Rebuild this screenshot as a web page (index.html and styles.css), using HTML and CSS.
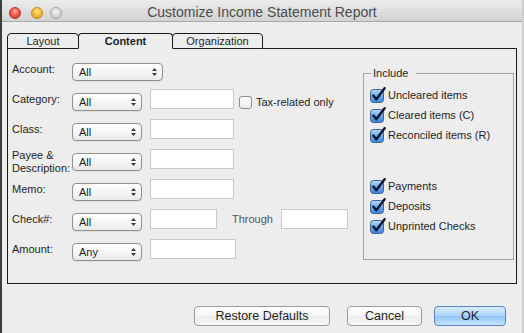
FILE: index.html
```html
<!DOCTYPE html>
<html lang="en-US">
  <head>
    <meta charset="utf-8" />
    <meta name="viewport" content="width=device-width" />
    <title>Customize Income Statement Report</title>
    <link rel="stylesheet" href="styles.css">
  </head>
  <body>
    <div class="window">
      <div class="titlebar">
        <div class="lights">
          <span class="light red"></span>
          <span class="light yellow"></span>
          <span class="light off"></span>
        </div>
        <div class="title">Customize Income Statement Report</div>
      </div>

      <div class="content">
        <div class="tabs">
          <div class="tab layout">Layout</div>
          <div class="tab active">Content</div>
          <div class="tab organization">Organization</div>
        </div>

        <div class="panel">
          <div class="form">
            <div class="row">
              <span class="label">Account:</span>
              <div class="popup wide"><span>All</span><svg class="arrows" width="5" height="8" viewBox="0 0 5 8"><path d="M2.5 0 L5 3 L0 3 Z M0 5 L5 5 L2.5 8 Z" fill="#3a3a3a"/></svg></div>
            </div>
            <div class="row">
              <span class="label">Category:</span>
              <div class="popup"><span>All</span><svg class="arrows" width="5" height="8" viewBox="0 0 5 8"><path d="M2.5 0 L5 3 L0 3 Z M0 5 L5 5 L2.5 8 Z" fill="#3a3a3a"/></svg></div>
              <div class="field"></div>
              <span class="box"></span>
              <span class="box-label">Tax-related only</span>
            </div>
            <div class="row">
              <span class="label">Class:</span>
              <div class="popup"><span>All</span><svg class="arrows" width="5" height="8" viewBox="0 0 5 8"><path d="M2.5 0 L5 3 L0 3 Z M0 5 L5 5 L2.5 8 Z" fill="#3a3a3a"/></svg></div>
              <div class="field"></div>
            </div>
            <div class="row">
              <span class="label two-line">Payee &amp;<br>Description:</span>
              <div class="popup"><span>All</span><svg class="arrows" width="5" height="8" viewBox="0 0 5 8"><path d="M2.5 0 L5 3 L0 3 Z M0 5 L5 5 L2.5 8 Z" fill="#3a3a3a"/></svg></div>
              <div class="field"></div>
            </div>
            <div class="row">
              <span class="label">Memo:</span>
              <div class="popup"><span>All</span><svg class="arrows" width="5" height="8" viewBox="0 0 5 8"><path d="M2.5 0 L5 3 L0 3 Z M0 5 L5 5 L2.5 8 Z" fill="#3a3a3a"/></svg></div>
              <div class="field"></div>
            </div>
            <div class="row">
              <span class="label">Check#:</span>
              <div class="popup"><span>All</span><svg class="arrows" width="5" height="8" viewBox="0 0 5 8"><path d="M2.5 0 L5 3 L0 3 Z M0 5 L5 5 L2.5 8 Z" fill="#3a3a3a"/></svg></div>
              <div class="field short"></div>
              <span class="through">Through</span>
              <div class="field short"></div>
            </div>
            <div class="row">
              <span class="label">Amount:</span>
              <div class="popup"><span>Any</span><svg class="arrows" width="5" height="8" viewBox="0 0 5 8"><path d="M2.5 0 L5 3 L0 3 Z M0 5 L5 5 L2.5 8 Z" fill="#3a3a3a"/></svg></div>
              <div class="field long"></div>
            </div>
          </div>

          <fieldset class="include">
            <legend>Include</legend>
            <div class="crow first">
              <svg class="tick" width="16" height="16" viewBox="0 0 16 16">
                <defs>
                  <linearGradient id="blue" x1="0" y1="0" x2="0" y2="1">
                    <stop offset="0" stop-color="#b9dafc"/>
                    <stop offset="0.5" stop-color="#6aaaf0"/>
                    <stop offset="1" stop-color="#3b83e0"/>
                  </linearGradient>
                </defs>
                <rect x="0.5" y="2.5" width="13" height="13" rx="3" fill="url(#blue)" stroke="#41608f"/>
                <path d="M3.3 8.6 L6.3 12.3 L14.6 1.2" fill="none" stroke="#0e1930" stroke-width="2.4" stroke-linecap="round" stroke-linejoin="round"/>
              </svg>
              Uncleared items
            </div>
            <div class="crow">
              <svg class="tick" width="16" height="16" viewBox="0 0 16 16"><rect x="0.5" y="2.5" width="13" height="13" rx="3" fill="url(#blue)" stroke="#41608f"/><path d="M3.3 8.6 L6.3 12.3 L14.6 1.2" fill="none" stroke="#0e1930" stroke-width="2.4" stroke-linecap="round" stroke-linejoin="round"/></svg>
              Cleared items (C)
            </div>
            <div class="crow">
              <svg class="tick" width="16" height="16" viewBox="0 0 16 16"><rect x="0.5" y="2.5" width="13" height="13" rx="3" fill="url(#blue)" stroke="#41608f"/><path d="M3.3 8.6 L6.3 12.3 L14.6 1.2" fill="none" stroke="#0e1930" stroke-width="2.4" stroke-linecap="round" stroke-linejoin="round"/></svg>
              Reconciled items (R)
            </div>
            <div class="crow spaced">
              <svg class="tick" width="16" height="16" viewBox="0 0 16 16"><rect x="0.5" y="2.5" width="13" height="13" rx="3" fill="url(#blue)" stroke="#41608f"/><path d="M3.3 8.6 L6.3 12.3 L14.6 1.2" fill="none" stroke="#0e1930" stroke-width="2.4" stroke-linecap="round" stroke-linejoin="round"/></svg>
              Payments
            </div>
            <div class="crow">
              <svg class="tick" width="16" height="16" viewBox="0 0 16 16"><rect x="0.5" y="2.5" width="13" height="13" rx="3" fill="url(#blue)" stroke="#41608f"/><path d="M3.3 8.6 L6.3 12.3 L14.6 1.2" fill="none" stroke="#0e1930" stroke-width="2.4" stroke-linecap="round" stroke-linejoin="round"/></svg>
              Deposits
            </div>
            <div class="crow last">
              <svg class="tick" width="16" height="16" viewBox="0 0 16 16"><rect x="0.5" y="2.5" width="13" height="13" rx="3" fill="url(#blue)" stroke="#41608f"/><path d="M3.3 8.6 L6.3 12.3 L14.6 1.2" fill="none" stroke="#0e1930" stroke-width="2.4" stroke-linecap="round" stroke-linejoin="round"/></svg>
              Unprinted Checks
            </div>
          </fieldset>
        </div>

        <div class="buttons">
          <button class="btn restore">Restore Defaults</button>
          <button class="btn cancel">Cancel</button>
          <button class="btn ok">OK</button>
        </div>
      </div>
    </div>
  </body>
</html>
```

FILE: styles.css
```css
html {
  font-family: "Liberation Sans", Arial, sans-serif;
}

body {
  margin: 0;
  height: 333px;
  overflow: hidden;
  background: linear-gradient(to right, #3d3d3d 0, #3d3d3d 2px, #cfcfcf 2px);
  font-size: 11px;
  color: #1e1e1e;
}

.window {
  margin-left: 2px;
  width: 520px;
  height: 333px;
  background: #ededed;
}

/* title bar */

.titlebar {
  position: relative;
  height: 21px;
  border-bottom: 1px solid #a9a9a9;
  background: linear-gradient(#ececec, #d2d2d2);
}

.title {
  text-align: center;
  font-size: 14px;
  line-height: 21px;
  padding-top: 2px;
  color: #4b4b4b;
}

.lights {
  position: absolute;
  left: 7px;
  top: 7px;
  display: flex;
}

.light {
  width: 12px;
  height: 12px;
  box-sizing: border-box;
  border-radius: 50%;
}

.red {
  border: 1px solid #b53a31;
  background: radial-gradient(circle at 50% 35%, #ffb3a8 0, #f35b4d 45%, #c9271c 100%);
}

.yellow {
  margin-left: 10px;
  border: 1px solid #c4891e;
  background: radial-gradient(circle at 50% 35%, #ffe7a3 0, #f8be3d 45%, #d58e12 100%);
}

.off {
  margin-left: 7px;
  border: 1px solid #a3a3a3;
  background: radial-gradient(circle at 50% 35%, #f6f6f6 0, #d8d8d8 50%, #bdbdbd 100%);
}

/* tabs */

.content {
  padding: 11px 0 0 5px;
}

.tabs {
  display: flex;
  margin-bottom: -1px;
}

.tab {
  position: relative;
  height: 14px;
  border: 1px solid #1a1a1a;
  border-radius: 4px 4px 0 0;
  margin-right: -1px;
  line-height: 14px;
  text-align: center;
  background: #ededed;
}

.layout {
  width: 70px;
}

.active {
  width: 93px;
  z-index: 1;
  font-weight: bold;
  border-bottom-color: #ededed;
}

.organization {
  width: 89px;
}

.panel {
  display: flex;
  width: 510px;
  height: 236px;
  box-sizing: border-box;
  border: 1px solid #1a1a1a;
}

/* left form */

.form {
  flex: 1;
  padding: 5px 0 0 4px;
}

.row {
  display: flex;
  align-items: center;
  height: 30px;
}

.label {
  flex: none;
  width: 60px;
  line-height: 13px;
}

.two-line {
  margin-top: 5px;
}

.popup {
  display: flex;
  align-items: center;
  justify-content: space-between;
  box-sizing: border-box;
  width: 70px;
  height: 18px;
  margin-top: 6px;
  padding: 0 5px 0 6px;
  border: 1px solid #8f8f8f;
  border-radius: 4px;
  background: linear-gradient(#ffffff, #f3f3f3 60%, #e9e9e9);
  box-shadow: 0 1px 0 rgba(0, 0, 0, 0.06);
}

.popup.wide {
  width: 91px;
  margin-top: 5px;
}

.field {
  box-sizing: border-box;
  width: 84px;
  height: 20px;
  margin-left: 8px;
  border: 1px solid #c8c8c8;
  background: #fff;
}

.field.short {
  width: 67px;
}

.field.long {
  width: 86px;
}

.box {
  box-sizing: border-box;
  width: 13px;
  height: 13px;
  margin: 6px 0 0 5px;
  border: 1px solid #8b8b8b;
  border-radius: 3px;
  background: linear-gradient(#ffffff, #ececec);
}

.box-label {
  margin: 5px 0 0 4px;
}

.through {
  margin: 0 0 0 15px;
  color: #555;
}

.through + .field {
  margin-left: 8px;
}

/* include group */

.include {
  align-self: flex-start;
  width: 151px;
  box-sizing: border-box;
  margin: 18px 2px 0 0;
  padding: 0 0 23px 6px;
  border: 1px solid #a3a3a3;
}

.include legend {
  margin-left: 1px;
  padding: 0 8px 0 2px;
  line-height: 13px;
  color: #222;
}

.crow {
  display: flex;
  align-items: center;
  gap: 2px;
  height: 20px;
}

.crow.first {
  margin-top: 5px;
}

.crow.spaced {
  margin-top: 31px;
}

.tick {
  flex: none;
}

/* buttons */

.buttons {
  display: flex;
  justify-content: flex-end;
  margin-top: 22px;
  padding-right: 16px;
}

.btn {
  height: 20px;
  box-sizing: border-box;
  padding: 0;
  border: 1px solid #9c9c9c;
  border-radius: 4px;
  background: linear-gradient(#ffffff, #f6f6f6 50%, #ececec 51%, #f7f7f7);
  font-family: "Liberation Sans", Arial, sans-serif;
  font-size: 12.5px;
  color: #1e1e1e;
}

.restore {
  width: 136px;
}

.cancel {
  width: 75px;
  margin-left: 17px;
}

.ok {
  width: 72px;
  margin-left: 12px;
  border-color: #5b83bc;
  background: linear-gradient(#d8ecfd, #acd4fa 50%, #8fc5f7 51%, #c6e4fd);
}
```
